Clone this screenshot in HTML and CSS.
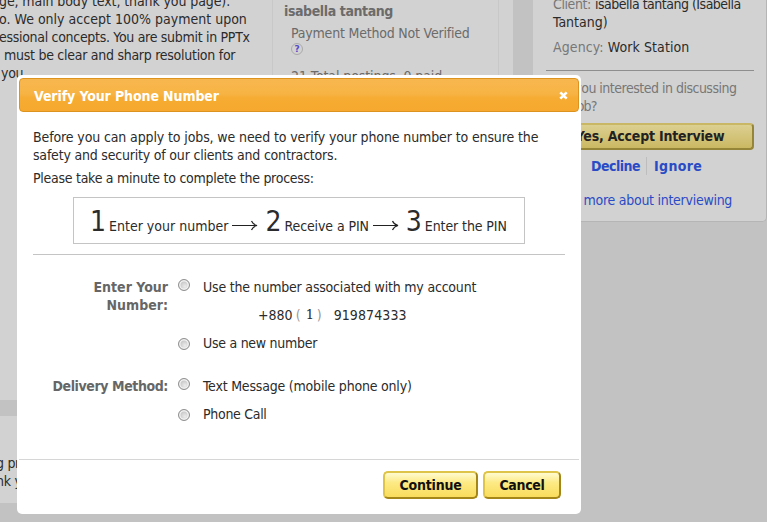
FILE: index.html
```html
<!DOCTYPE html>
<html lang="en"><head><meta charset="utf-8"><title>Verify Your Phone Number</title>
<link rel="stylesheet" href="styles.css"></head>
<body>
<div class="page">
  <div class="main">
    <section class="job">
      <div class="copy">
        <p class="t1">ge, main body text, thank you page).</p>
        <p class="t0">o. We only accept 100% payment upon</p>
        <p class="t3">essional concepts. You are submit in PPTx</p>
        <p class="in4 t27">must be clear and sharp resolution for</p>
        <p class="in1 t3">you.</p>
      </div>
      <div class="client">
        <h3 class="t4">isabella tantang</h3>
        <p class="pay t2">Payment Method Not Verified</p>
        <i class="help">?</i>
        <p class="total t1">21 Total postings, 0 paid</p>
      </div>
    </section>
    <section class="note"><p class="t3">g priority</p><p class="t3">nk you</p></section>
  </div>
  <aside class="side">
    <p><span class="dim t4">Client:</span><span class="val t5">isabella tantang (Isabella</span></p>
    <p class="t0">Tantang)</p>
    <p class="agency"><span class="dim w1">Agency:</span><span class="val w1">Work Station</span></p>
    <hr>
    <p class="dim ask t5">Are you interested in discussing</p>
    <p class="dim ask t8">this job?</p>
    <a class="accept t2">Yes, Accept Interview</a>
    <div class="links"><a class="t5">Decline</a><a class="w3">Ignore</a></div>
    <p class="learn t27">Learn more about interviewing</p>
  </aside>
</div>
<div class="dialog">
  <header><h2 class="t1">Verify Your Phone Number</h2>
    <svg class="close" width="9" height="9" viewBox="0 0 9 9"><path d="M1.3 1.3 7.7 7.7M7.7 1.3 1.3 7.7"/></svg></header>
  <div class="body">
    <p class="t12">Before you can apply to jobs, we need to verify your phone number to ensure the</p>
    <p class="t2">safety and security of our clients and contractors.</p>
    <p class="gap t27">Please take a minute to complete the process:</p>
    <div class="steps">
      <b>1</b><span class="t0">Enter your number</span><svg width="26" height="12" viewBox="0 0 26 12"><path d="M0 6.5H24.5M19.5 2Q21 5.5 25 6.5Q21 7.5 19.5 11"/></svg>
      <b>2</b><span class="t1">Receive a PIN</span><svg width="26" height="12" viewBox="0 0 26 12"><path d="M0 6.5H24.5M19.5 2Q21 5.5 25 6.5Q21 7.5 19.5 11"/></svg>
      <b>3</b><span class="t1">Enter the PIN</span>
    </div>
    <form class="form">
      <div class="name"><span class="t0">Enter Your</span><br><span class="t0">Number:</span></div>
      <div class="opts">
        <label><i class="radio"></i><span class="t2">Use the number associated with my account</span></label>
        <div class="number"><span class="t0">+880</span><span class="paren">(</span><span class="area">1</span><span class="paren close-paren">)</span><span class="w1">919874333</span></div>
        <label><i class="radio low"></i><span class="t27">Use a new number</span></label>
      </div>
      <div class="name second"><span class="t4">Delivery Method:</span></div>
      <div class="opts second">
        <label><i class="radio"></i><span class="t2">Text Message (mobile phone only)</span></label>
        <label><i class="radio low"></i><span class="t3">Phone Call</span></label>
      </div>
    </form>
  </div>
  <footer><button class="cont t2">Continue</button><button class="canc t3">Cancel</button></footer>
</div>
</body></html>
```
FILE: styles.css
```css
* { box-sizing: border-box; margin: 0; padding: 0; }
body { width: 767px; height: 522px; overflow: hidden; background: #c2c2c2; color: #2b2b2b; font: 14px/18px "DejaVu Sans Condensed", "DejaVu Sans", sans-serif; font-stretch: condensed; position: relative; }
p, span { white-space: nowrap; }

/* tracking steps */
.t0 { letter-spacing: 0.01px; }
.t1 { letter-spacing: -0.1px; }
.t12 { letter-spacing: -0.12px; }
.t2 { letter-spacing: -0.2px; }
.t27 { letter-spacing: -0.27px; }
.t3 { letter-spacing: -0.3px; }
.t4 { letter-spacing: -0.4px; }
.t5 { letter-spacing: -0.5px; }
.t8 { letter-spacing: -0.8px; }
.w1 { letter-spacing: 0.1px; }
.w3 { letter-spacing: 0.3px; }

.page { display: flex; gap: 20px; height: 522px; }
.main { width: 513px; flex: none; display: flex; flex-direction: column; gap: 16px; }
.job { height: 400px; background: #d2d2d2; display: flex; }
.copy { width: 272px; margin-top: -8px; }
.copy p { margin-left: -1px; }
.copy .in4 { margin-left: 4px; }
.copy .in1 { margin-left: 1px; }
.client { width: 227px; border: solid #c8c8c8; border-width: 0 1px; padding: 2px 0 0 11px; color: #6b6b6b; }
h3 { font: bold 14px/18px "DejaVu Sans Condensed", sans-serif; }
.pay { margin: 4px 0 1px 7px; }
.help { display: block; width: 12px; height: 12px; margin: 1px 0 0 7px; border: 1px solid #aaa; border-radius: 50%; color: #5548c8; font: bold 9px/10px "DejaVu Sans", sans-serif; text-align: center; }
.total { margin: 12px 0 0 7px; }
.note { height: 87px; background: #d2d2d2; padding-top: 38px; }
.note p { margin-left: -4px; }
.side { width: 234px; height: 222px; background: #d2d2d2; border: solid #b5b5b5; border-width: 0 1px 1px 0; border-radius: 0 0 5px 0; padding: 0 12px 0 20px; }
.side > p:first-child { margin-top: -5px; }
.dim { color: #777; }
.val { margin-left: 4px; color: #2b2b2b; }
.agency { margin-top: 7px; }
.ask { margin-left: -2px; }
hr { border: 0; border-top: 1px solid #8e8e8e; margin: 14px 0 8px -7px; }
.accept { display: flex; justify-content: center; margin: 8px 0 0 -7px; height: 27px; border: 2px solid; border-color: #c9b765 #958539 #958539 #c9b765; border-radius: 4px; background: linear-gradient(#dcd091, #cbb863); font: bold 14px/22px "DejaVu Sans Condensed", sans-serif; color: #222; }
.links { display: flex; margin: 7px 0 0 38px; color: #2a4bc6; font-weight: bold; }
.links a + a { border-left: 1px solid #bdbdbd; margin-left: 6px; padding-left: 7px; }
.learn { margin: 16px 0 0 -7px; color: #2a4bc6; }

.dialog { position: absolute; left: 17px; top: 75px; width: 564px; height: 439px; background: #fff; border-radius: 5px; padding: 3px 2px; display: flex; flex-direction: column; }
header { height: 34px; flex: none; display: flex; align-items: center; justify-content: space-between; padding: 1px 10px 0 14px; border: 1px solid #dd931f; border-radius: 4px; background: linear-gradient(#f8b74f, #f7b445 45%, #f6ab32 60%, #f6a92e); }
h2 { font: bold 14px/18px "DejaVu Sans Condensed", sans-serif; color: #fff; }
.close { fill: none; stroke: #fff; stroke-width: 2.6; }
.body { padding: 16px 14px 0; flex: 1; }
.gap { margin-top: 5px; }
.steps { display: flex; align-items: baseline; width: 452px; height: 47px; margin: 10px 0 10px 40px; padding: 6px 0 0 16px; border: 1px solid #c4c4c4; line-height: 36px; }
.steps b { font-weight: normal; font-size: 28px; width: 19px; }
.steps svg { margin: 0 7px 0 4px; fill: none; stroke: #222; stroke-width: 1.2; }
.form { border-top: 1px solid #c4c4c4; display: grid; grid-template-columns: 135px 1fr; padding-top: 23px; }
.name { text-align: right; font-weight: bold; color: #666; }
.opts { padding-left: 10px; display: grid; row-gap: 10px; align-content: start; }
.opts label { display: flex; }
.radio { width: 12px; height: 12px; margin: 1px 13px 0 0; border: 1px solid #8f8f8f; border-radius: 50%; background: radial-gradient(circle at 60% 65%, #ececec, #c4c4c4 65%); box-shadow: inset 0 0 0 1.5px #f1f1f1; }
.radio.low { margin-top: 4px; }
.number { display: flex; padding-left: 80px; }
.paren { color: #999; margin-left: 3px; width: 10px; }
.area { font: 13px/18px "DejaVu Serif", serif; width: 11px; }
.close-paren { margin-left: 0; width: 17px; }
.second { margin-top: 25px; }
footer { height: 52px; border-top: 1px solid #d6d6d6; display: flex; justify-content: flex-end; gap: 5px; padding: 11px 18px 0 0; }
button { height: 28px; border: 2px solid; border-color: #dfc44a #a38617 #a38617 #dfc44a; border-radius: 5px; background: linear-gradient(#fffbd0, #fdea85 40%, #f9dc5c); font: bold 14px/22px "DejaVu Sans Condensed", sans-serif; color: #111; }
.cont { width: 95px; }
.canc { width: 78px; }
```
